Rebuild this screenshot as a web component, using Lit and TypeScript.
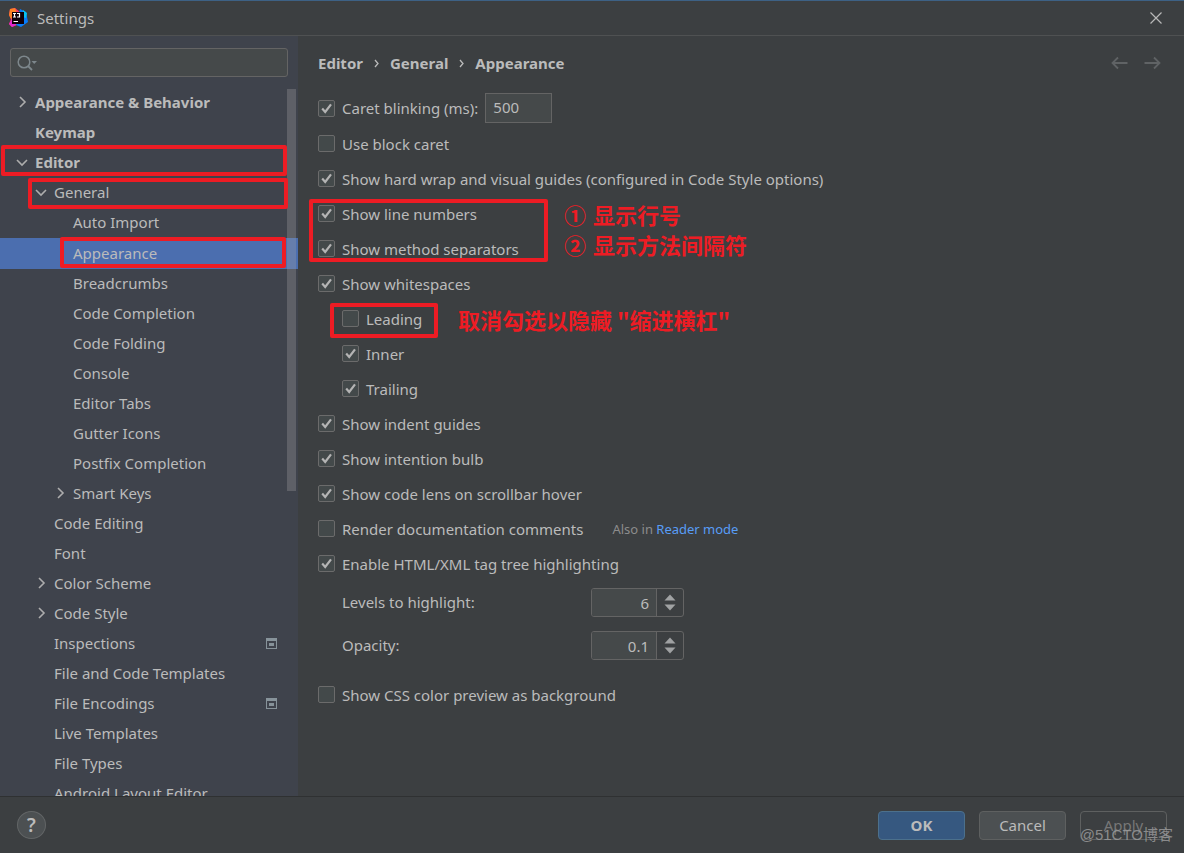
import { LitElement, html, css, svg, nothing } from "lit";
import { customElement, state } from "lit/decorators.js";
import { classMap } from "lit/directives/class-map.js";

interface TreeItem {
  label: string;
  level: 0 | 1 | 2;
  arrow?: "open" | "closed";
  bold?: boolean;
  project?: boolean;
}

const TREE: TreeItem[] = [
  { label: "Appearance & Behavior", level: 0, arrow: "closed", bold: true },
  { label: "Keymap", level: 0, bold: true },
  { label: "Editor", level: 0, arrow: "open", bold: true },
  { label: "General", level: 1, arrow: "open" },
  { label: "Auto Import", level: 2 },
  { label: "Appearance", level: 2 },
  { label: "Breadcrumbs", level: 2 },
  { label: "Code Completion", level: 2 },
  { label: "Code Folding", level: 2 },
  { label: "Console", level: 2 },
  { label: "Editor Tabs", level: 2 },
  { label: "Gutter Icons", level: 2 },
  { label: "Postfix Completion", level: 2 },
  { label: "Smart Keys", level: 2, arrow: "closed" },
  { label: "Code Editing", level: 1 },
  { label: "Font", level: 1 },
  { label: "Color Scheme", level: 1, arrow: "closed" },
  { label: "Code Style", level: 1, arrow: "closed" },
  { label: "Inspections", level: 1, project: true },
  { label: "File and Code Templates", level: 1 },
  { label: "File Encodings", level: 1, project: true },
  { label: "Live Templates", level: 1 },
  { label: "File Types", level: 1 },
  { label: "Android Layout Editor", level: 1 },
];

@customElement("app-root")
export class AppRoot extends LitElement {
  @state() private selected = "Appearance";

  static styles = css`
    :host {
      display: flex;
      flex-direction: column;
      position: relative;
      height: 100vh;
      box-sizing: border-box;
      overflow: hidden;
      border-top: 1px solid #3d6185;
      background: #3c3f41;
      color: #bbbbbb;
      font: 15px/20px "Noto Sans", "Noto Sans CJK SC", sans-serif;
    }
    * { box-sizing: border-box; }
    button, input { font: inherit; color: inherit; margin: 0; }
    button { padding: 0; border: 0; background: none; }
    svg { display: block; flex: none; fill: none; }

    .titlebar {
      flex: none;
      display: flex;
      align-items: center;
      gap: 9px;
      height: 35px;
      padding: 0 20px 0 8px;
      border-bottom: 1px solid #4f5152;
    }
    .titlebar h1 { flex: 1; margin: 0; font-size: 15px; font-weight: 400; }

    .body { flex: 1; display: flex; min-height: 0; }

    .sidebar {
      position: relative;
      flex: none;
      display: flex;
      flex-direction: column;
      width: 298px;
      padding-top: 12px;
      overflow: hidden;
      background: #3f434c;
    }
    .search {
      flex: none;
      display: flex;
      align-items: center;
      height: 29px;
      margin: 0 10px;
      padding: 0 6px;
      border: 1px solid #646464;
      border-radius: 3px;
      background: #45494a;
    }
    .search input { flex: 1; min-width: 0; border: 0; outline: 0; background: none; }
    .tree { flex: 1; min-height: 0; margin: 0; padding: 11px 0 0; overflow: hidden; list-style: none; }
    .node {
      display: flex;
      align-items: center;
      gap: 7px;
      width: 100%;
      height: 30px;
      padding-right: 21px;
      padding-bottom: 2px;
      text-align: left;
      white-space: nowrap;
    }
    .node span { flex: 1; }
    .level0 { padding-left: 16px; }
    .level1 { padding-left: 35px; }
    .level2 { padding-left: 54px; }
    .bold { font-weight: 700; }
    .selected { height: 31px; background: #4b6eaf; }
    .thumb {
      position: absolute;
      top: 53px;
      right: 2px;
      width: 9px;
      height: 402px;
      background: #a6a6a64d;
    }

    .content { flex: 1; min-width: 0; padding: 16px 23px 0 20px; }
    .crumbs { display: flex; align-items: center; height: 22px; margin-bottom: 16px; font-weight: 700; }
    .crumbs svg { margin: 0 11px; }
    .crumbs .history { display: flex; gap: 16px; margin-left: auto; }
    .crumbs .history svg { margin: 0; }

    .row { display: flex; align-items: center; min-height: 35px; padding: 3px 0; }
    .row.nested { padding-left: 24px; }
    .option { display: flex; align-items: center; gap: 7px; white-space: nowrap; }
    .box { display: grid; width: 17px; height: 17px; }
    .box input {
      grid-area: 1 / 1;
      appearance: none;
      width: 17px;
      height: 17px;
      border: 1px solid #6b6b6b;
      border-radius: 2px;
      background: #43494a;
    }
    .box svg { grid-area: 1 / 1; visibility: hidden; pointer-events: none; }
    .box input:checked + svg { visibility: visible; }
    .ms {
      width: 67px;
      height: 30px;
      margin-left: 7px;
      padding: 0 7px 3px;
      border: 1px solid #646464;
      border-radius: 0;
      outline: 0;
      background: #45494a;
    }
    .hint { margin-left: 29px; font-size: 13px; color: #8c8c8c; }
    .hint a { color: #589df6; text-decoration: none; }
    .setting {
      display: grid;
      grid-template-columns: 249px max-content;
      align-items: center;
      height: 43px;
      padding-left: 24px;
    }
    .setting label { padding-bottom: 2px; }
    .spinner {
      display: flex;
      width: 93px;
      height: 29px;
      border: 1px solid #646464;
      border-radius: 3px;
      overflow: hidden;
    }
    .spinner input {
      flex: 1;
      min-width: 0;
      padding: 0 7px 0 0;
      border: 0;
      border-right: 1px solid #646464;
      outline: 0;
      background: #45494a;
      text-align: right;
    }
    .steps { display: flex; flex-direction: column; justify-content: center; gap: 3px; width: 26px; }
    .steps button { display: flex; justify-content: center; }
    .last { margin-top: 10px; }

    .footer {
      flex: none;
      display: flex;
      align-items: center;
      gap: 14px;
      height: 57px;
      padding: 0 17px;
      border-top: 1px solid #2f3132;
    }
    .help {
      width: 29px;
      height: 28px;
      margin-right: auto;
      border: 1px solid #626566;
      border-radius: 50%;
      background: #4c5052;
      font-size: 19px;
      font-weight: 600;
    }
    .btn {
      width: 88px;
      height: 29px;
      border: 1px solid #5e6060;
      border-radius: 4px;
      background: #4c5052;
    }
    .footer .btn { width: 87px; }
    .primary { border-color: #4c708c; background: #365880; font-weight: 700; }
    .btn:disabled { background: none; color: #777777; }

    .mark { position: absolute; border: 4px solid #ed1c24; border-radius: 2px; pointer-events: none; }
    .mark-editor { left: 1px; top: 144px; width: 286px; height: 31px; }
    .mark-general { left: 28px; top: 177px; width: 260px; height: 31px; }
    .mark-appearance { left: 60px; top: 236px; width: 226px; height: 31px; }
    .mark-lines { left: 309px; top: 198px; width: 239px; height: 63px; }
    .mark-leading { left: 330px; top: 302px; width: 108px; height: 35px; }
    .note {
      position: absolute;
      margin: 0;
      color: #ed1c24;
      font: 700 22px/30px "Noto Sans CJK SC", sans-serif;
      white-space: nowrap;
    }
    .note-lines { display: grid; grid-template-columns: auto auto; column-gap: 7px; left: 564px; top: 198px; }
    .note-leading { left: 458px; top: 303px; }
    .watermark {
      position: absolute;
      right: 11px;
      bottom: 8px;
      color: #a0a0a0cc;
      font: 15px/20px "Liberation Sans", "Noto Sans CJK SC", sans-serif;
      pointer-events: none;
    }
  `;

  private arrow(kind?: "open" | "closed") {
    const d = kind === "open" ? "M1 4L6 9L11 4" : "M4 1L9 6L4 11";
    return html`<svg width="12" height="12" viewBox="0 0 12 12" aria-hidden="true">
      ${kind ? svg`<path d=${d} stroke="#adadad" stroke-width="1.6"></path>` : nothing}
    </svg>`;
  }

  private node(item: TreeItem) {
    const classes = {
      node: true,
      [`level${item.level}`]: true,
      bold: !!item.bold,
      selected: item.label === this.selected,
    };
    return html`<li>
      <button class=${classMap(classes)} @click=${() => (this.selected = item.label)}>
        ${this.arrow(item.arrow)}<span>${item.label}</span>
        ${item.project
          ? html`<svg width="11" height="11" viewBox="0 0 11 11" aria-hidden="true">
              <path d="M0 0H11V11H0ZM1 3V10H10V3Z" fill="#87939a" fill-rule="evenodd"></path>
              <path d="M3 5H8V8H3Z" fill="#87939a"></path>
            </svg>`
          : nothing}
      </button>
    </li>`;
  }

  private option(label: string, checked: boolean) {
    return html`<label class="option">
      <div class="box">
        <input type="checkbox" .checked=${checked} />
        <svg width="17" height="17" viewBox="0 0 17 17" aria-hidden="true">
          <path d="M4.2 8.6L7.2 12L13 4.4" stroke="#b4b4b4" stroke-width="2.2"></path>
        </svg>
      </div>
      <span>${label}</span>
    </label>`;
  }

  private row(label: string, checked: boolean, nested = false) {
    return html`<div class=${classMap({ row: true, nested })}>${this.option(label, checked)}</div>`;
  }

  private setting(id: string, label: string, value: string) {
    return html`<div class="setting">
      <label for=${id}>${label}</label>
      <div class="spinner">
        <input id=${id} type="text" .value=${value} />
        <div class="steps">
          <button aria-label="Increase">
            <svg width="12" height="7" viewBox="0 0 12 7"><path d="M0.5 6.5L6 0.5L11.5 6.5Z" fill="#a0a2a3"></path></svg>
          </button>
          <button aria-label="Decrease">
            <svg width="12" height="7" viewBox="0 0 12 7"><path d="M0.5 0.5L6 6.5L11.5 0.5Z" fill="#a0a2a3"></path></svg>
          </button>
        </div>
      </div>
    </div>`;
  }

  private crumbArrow() {
    return html`<svg width="5" height="9" viewBox="0 0 5 9" aria-hidden="true">
      <path d="M1 1L4 4.5L1 8" stroke="#bbbbbb" stroke-width="1.3"></path>
    </svg>`;
  }

  render() {
    return html`
      <header class="titlebar">
        <svg width="20" height="20" viewBox="0 0 20 20" aria-hidden="true">
          <path d="M2 1L7 0L12 4L9 17L4 19L1 16L3 11L1 7Z" fill="#fc3266"></path>
          <path d="M2 1L7 0L9 5L3 11L1 7Z" fill="#fd8224"></path>
          <path d="M12 1L18 4L20 14L13 19L8 17Z" fill="#087cfa"></path>
          <path d="M15 2L19 5L18 10L14 9Z" fill="#07c3f2"></path>
          <path d="M1 16L4 11L8 17L4 19Z" fill="#e22ad0"></path>
          <path d="M4 4H16V16H4Z" fill="#100008"></path>
          <path d="M5 5.5H8M6.5 5.5V9M5 9H8M9 5.5H11.5V9H9M5.5 13.5H10" stroke="#ffffff" stroke-width="1.2"></path>
        </svg>
        <h1>Settings</h1>
        <button aria-label="Close">
          <svg width="16" height="16" viewBox="0 0 16 16">
            <path d="M2.5 2.5L13.5 13.5M13.5 2.5L2.5 13.5" stroke="#b8b8b8" stroke-width="1.2"></path>
          </svg>
        </button>
      </header>

      <div class="body">
        <nav class="sidebar" aria-label="Settings categories">
          <div class="search">
            <svg width="21" height="16" viewBox="0 0 21 16" aria-hidden="true">
              <circle cx="7" cy="7" r="5.8" stroke="#7d878c" stroke-width="1.5"></circle>
              <path d="M11 11L15 15" stroke="#7d878c" stroke-width="1.8"></path>
              <path d="M14.5 6H20L17.2 9Z" fill="#7d878c"></path>
            </svg>
            <input type="text" aria-label="Search settings" />
          </div>
          <ul class="tree">${TREE.map((item) => this.node(item))}</ul>
          <div class="thumb"></div>
        </nav>

        <main class="content">
          <div class="crumbs">
            <span>Editor</span>${this.crumbArrow()}<span>General</span>${this.crumbArrow()}<span>Appearance</span>
            <div class="history">
              <button aria-label="Back">
                <svg width="17" height="14" viewBox="0 0 17 14">
                  <path d="M16.5 7H1.5M7 1.5L1.5 7L7 12.5" stroke="#606365" stroke-width="1.8"></path>
                </svg>
              </button>
              <button aria-label="Forward">
                <svg width="17" height="14" viewBox="0 0 17 14">
                  <path d="M0.5 7H15.5M10 1.5L15.5 7L10 12.5" stroke="#606365" stroke-width="1.8"></path>
                </svg>
              </button>
            </div>
          </div>

          <div class="row">
            ${this.option("Caret blinking (ms):", true)}
            <input class="ms" type="text" aria-label="Caret blinking period" value="500" />
          </div>
          ${this.row("Use block caret", false)}
          ${this.row("Show hard wrap and visual guides (configured in Code Style options)", true)}
          ${this.row("Show line numbers", true)}
          ${this.row("Show method separators", true)}
          ${this.row("Show whitespaces", true)}
          ${this.row("Leading", false, true)}
          ${this.row("Inner", true, true)}
          ${this.row("Trailing", true, true)}
          ${this.row("Show indent guides", true)}
          ${this.row("Show intention bulb", true)}
          ${this.row("Show code lens on scrollbar hover", true)}
          <div class="row">
            ${this.option("Render documentation comments", false)}
            <span class="hint">Also in <a href="#reader">Reader mode</a></span>
          </div>
          ${this.row("Enable HTML/XML tag tree highlighting", true)}
          ${this.setting("levels", "Levels to highlight:", "6")}
          ${this.setting("opacity", "Opacity:", "0.1")}
          <div class="last">${this.row("Show CSS color preview as background", false)}</div>
        </main>
      </div>

      <footer class="footer">
        <button class="help" aria-label="Help">?</button>
        <button class="btn primary">OK</button>
        <button class="btn">Cancel</button>
        <button class="btn" disabled>Apply</button>
      </footer>

      <div class="mark mark-editor"></div>
      <div class="mark mark-general"></div>
      <div class="mark mark-appearance"></div>
      <div class="mark mark-lines"></div>
      <div class="mark mark-leading"></div>
      <div class="note note-lines">
        <span>①</span><span>显示行号</span>
        <span>②</span><span>显示方法间隔符</span>
      </div>
      <p class="note note-leading">取消勾选以隐藏 "缩进横杠"</p>
      <div class="watermark">@51CTO博客</div>
    `;
  }
}
